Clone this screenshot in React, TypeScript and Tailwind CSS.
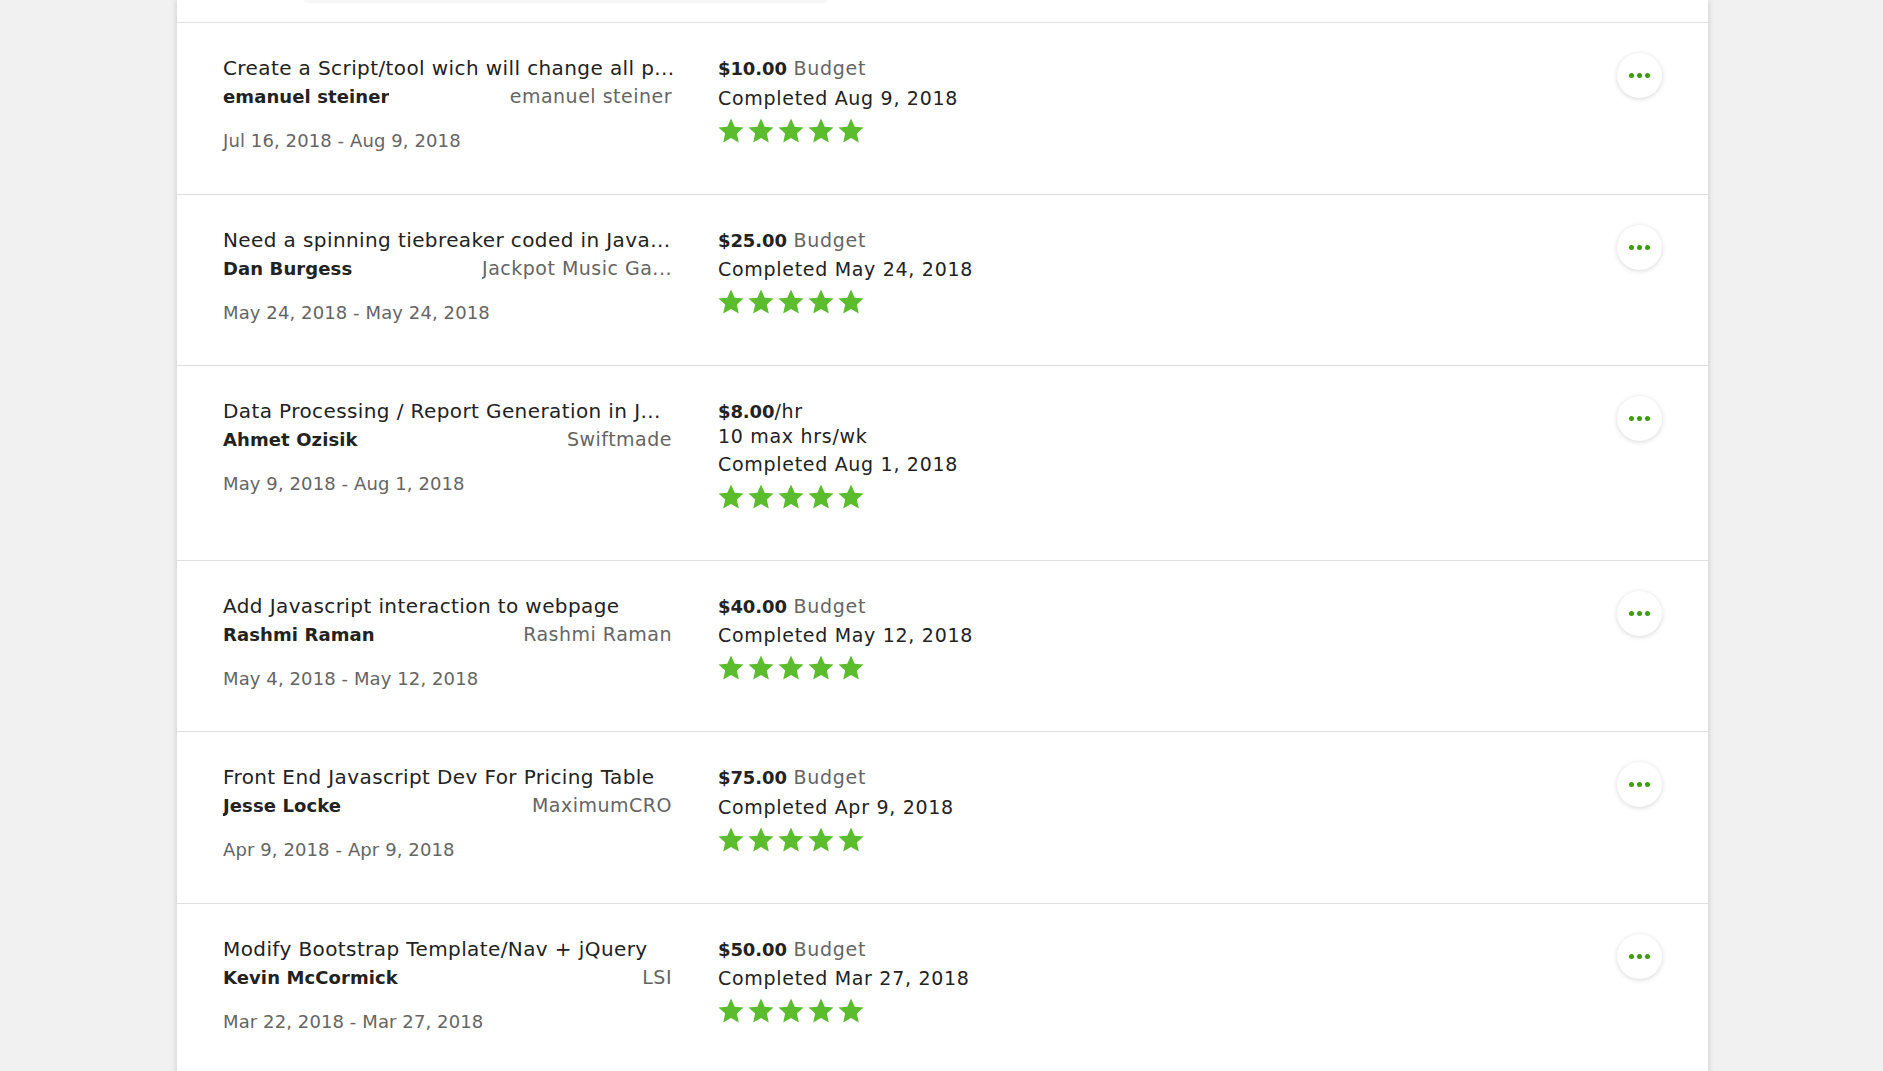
import React from "react";

type Row = {
  title: string;
  name: string;
  company: string;
  dates: string;
  price: string;
  unit: string;
  hours?: string;
  completed: string;
};

const rows: Row[] = [
  {
    title: "Create a Script/tool wich will change all p...",
    name: "emanuel steiner",
    company: "emanuel steiner",
    dates: "Jul 16, 2018 - Aug 9, 2018",
    price: "$10.00",
    unit: " Budget",
    completed: "Completed Aug 9, 2018",
  },
  {
    title: "Need a spinning tiebreaker coded in Java...",
    name: "Dan Burgess",
    company: "Jackpot Music Ga...",
    dates: "May 24, 2018 - May 24, 2018",
    price: "$25.00",
    unit: " Budget",
    completed: "Completed May 24, 2018",
  },
  {
    title: "Data Processing / Report Generation in J...",
    name: "Ahmet Ozisik",
    company: "Swiftmade",
    dates: "May 9, 2018 - Aug 1, 2018",
    price: "$8.00",
    unit: "/hr",
    hours: "10 max hrs/wk",
    completed: "Completed Aug 1, 2018",
  },
  {
    title: "Add Javascript interaction to webpage",
    name: "Rashmi Raman",
    company: "Rashmi Raman",
    dates: "May 4, 2018 - May 12, 2018",
    price: "$40.00",
    unit: " Budget",
    completed: "Completed May 12, 2018",
  },
  {
    title: "Front End Javascript Dev For Pricing Table",
    name: "Jesse Locke",
    company: "MaximumCRO",
    dates: "Apr 9, 2018 - Apr 9, 2018",
    price: "$75.00",
    unit: " Budget",
    completed: "Completed Apr 9, 2018",
  },
  {
    title: "Modify Bootstrap Template/Nav + jQuery",
    name: "Kevin McCormick",
    company: "LSI",
    dates: "Mar 22, 2018 - Mar 27, 2018",
    price: "$50.00",
    unit: " Budget",
    completed: "Completed Mar 27, 2018",
  },
];

function Star() {
  return (
    <svg width="26" height="26" viewBox="0 0 24 24" className="block">
      <polygon
        points="12,0.4 15.4,8 23.6,8.8 17.4,14.3 19.2,22.7 12,18.5 4.8,22.7 6.6,14.3 0.4,8.8 8.6,8"
        fill="#5bbc2e"
      />
    </svg>
  );
}

function Stars() {
  return (
    <div className="mt-[6px] flex h-[26px] gap-[4px]">
      <Star />
      <Star />
      <Star />
      <Star />
      <Star />
    </div>
  );
}

function DotsButton() {
  return (
    <button className="mt-[-1px] flex h-[45px] w-[45px] shrink-0 items-center justify-center gap-[3px] rounded-full bg-white shadow-[0_1px_5px_rgba(0,0,0,0.16)]">
      <span className="h-[5px] w-[5px] rounded-full bg-[#3c9e00]" />
      <span className="h-[5px] w-[5px] rounded-full bg-[#3c9e00]" />
      <span className="h-[5px] w-[5px] rounded-full bg-[#3c9e00]" />
    </button>
  );
}

function ContractRow({ r }: { r: Row }) {
  return (
    <div className="flex items-start border-t border-[#e0e0e0] pb-[50px] pl-[46px] pr-[46px] pt-[31px]">
      <div className="w-[449px] shrink-0">
        <div className="mt-[1px] whitespace-nowrap text-[20px] leading-[27px] tracking-[0.4px] text-[#222222]">
          {r.title}
        </div>
        <div className="flex items-baseline justify-between gap-4 leading-[28px]">
          <span className="truncate text-[18px] font-bold tracking-[0.1px] text-[#222222]">{r.name}</span>
          <span className="truncate tracking-[0.5px] text-[#656565]">{r.company}</span>
        </div>
        <div className="mb-[-13px] mt-[16px] text-[18px] leading-[28px] tracking-[0.1px] text-[#656565]">
          {r.dates}
        </div>
      </div>
      <div className="ml-[46px] flex-1 tracking-[0.7px]">
        <div className="mt-[1px] leading-[27px] text-[#222222]">
          <span className="text-[18px] font-bold tracking-[-0.1px]">{r.price}</span>
          <span className={r.unit === "/hr" ? "text-[#222222]" : "text-[#656565]"}>{r.unit}</span>
        </div>
        {r.hours && <div className="leading-[23px] text-[#222222]">{r.hours}</div>}
        <div className="mt-[2.5px] leading-[27px] text-[#222222]">{r.completed}</div>
        <Stars />
      </div>
      <DotsButton />
    </div>
  );
}

export default function App() {
  return (
    <div
      className="h-[1071px] w-full overflow-hidden bg-[#f1f1f1] text-[19px] tracking-[0.3px]"
      style={{ fontFamily: '"DejaVu Sans", "Open Sans", sans-serif' }}
    >
      <div className="ml-[177px] w-[1531px] bg-white shadow-[0_0_6px_rgba(0,0,0,0.18)]">
        <div className="h-[22px]">
          <div className="ml-[127px] h-[3px] w-[523px] rounded-b-full bg-[#f7f7f7]" />
        </div>
        {rows.map((r, i) => (
          <ContractRow key={i} r={r} />
        ))}
      </div>
    </div>
  );
}
